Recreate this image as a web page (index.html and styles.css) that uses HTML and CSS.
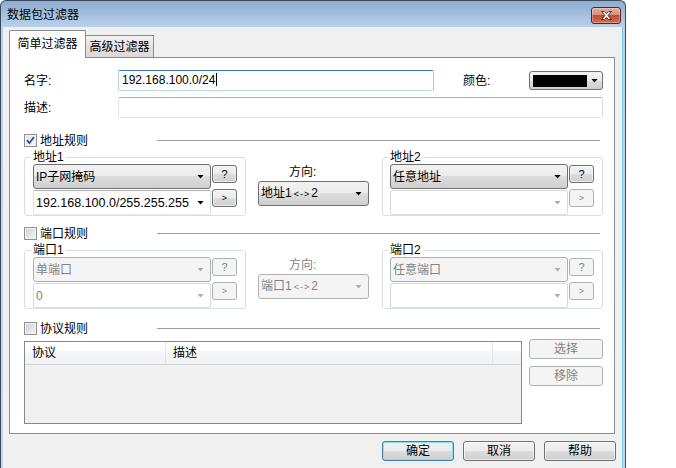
FILE: index.html
```html
<!DOCTYPE html>
<html lang="zh-CN">
<head>
    <meta charset="UTF-8">
    <title>数据包过滤器</title>
    <link rel="stylesheet" href="styles.css">
</head>
<body>
    <div class="window">
        <div class="titlebar">
            <span class="title">数据包过滤器</span>
            <span class="close-btn">
                <svg width="11" height="9" viewBox="0 0 12 10"><polygon points="0.5,0.5 3.5,0.5 6,3 8.5,0.5 11.5,0.5 7.7,5 11.5,9.5 8.5,9.5 6,7 3.5,9.5 0.5,9.5 4.3,5" fill="#fff" stroke="#4a1c16" stroke-width="1"/></svg>
            </span>
        </div>

        <div class="client">
            <div class="tabs">
                <div class="tab active">简单过滤器</div>
                <div class="tab">高级过滤器</div>
            </div>

            <div class="panel">
                <div class="fields">
                    <label class="field-label">名字:</label>
                    <div class="textbox focused">192.168.100.0/24<span class="caret"></span></div>
                    <label class="field-label color-label">颜色:</label>
                    <div class="color-combo"><span class="swatch"></span><span class="arrow"></span></div>
                    <label class="field-label">描述:</label>
                    <div class="textbox wide"></div>
                </div>

                <!-- 地址规则 -->
                <div class="section-head">
                    <span class="check-label">
                        <span class="checkbox checked"><svg width="9" height="9" viewBox="0 0 9 9"><path d="M1 4.2 L3.4 7 L8 1" fill="none" stroke="#31509a" stroke-width="1.8"/></svg></span>地址规则
                    </span>
                    <span class="rule"></span>
                </div>
                <div class="rule-grid">
                    <fieldset class="group">
                        <legend>地址1</legend>
                        <div class="group-row">
                            <div class="combo"><span class="combo-text">IP子网掩码</span><span class="arrow"></span></div>
                            <button type="button" class="mini-btn">?</button>
                        </div>
                        <div class="group-row">
                            <div class="combo edit"><span class="combo-text big">192.168.100.0/255.255.255</span><span class="arrow"></span></div>
                            <button type="button" class="mini-btn small">&gt;</button>
                        </div>
                    </fieldset>
                    <div class="direction">
                        <div class="dir-label">方向:</div>
                        <div class="combo dir-combo"><span class="combo-text">地址1<small>&lt;-&gt;</small>2</span><span class="arrow"></span></div>
                    </div>
                    <fieldset class="group right">
                        <legend>地址2</legend>
                        <div class="group-row">
                            <div class="combo"><span class="combo-text">任意地址</span><span class="arrow"></span></div>
                            <button type="button" class="mini-btn">?</button>
                        </div>
                        <div class="group-row">
                            <div class="combo edit disabled"><span class="combo-text"></span><span class="arrow"></span></div>
                            <button type="button" class="mini-btn small disabled">&gt;</button>
                        </div>
                    </fieldset>
                </div>

                <!-- 端口规则 -->
                <div class="section-head">
                    <span class="check-label"><span class="checkbox"></span>端口规则</span>
                    <span class="rule"></span>
                </div>
                <div class="rule-grid ports">
                    <fieldset class="group">
                        <legend>端口1</legend>
                        <div class="group-row">
                            <div class="combo disabled"><span class="combo-text">单端口</span><span class="arrow"></span></div>
                            <button type="button" class="mini-btn disabled">?</button>
                        </div>
                        <div class="group-row">
                            <div class="combo edit disabled"><span class="combo-text">0</span><span class="arrow"></span></div>
                            <button type="button" class="mini-btn small disabled">&gt;</button>
                        </div>
                    </fieldset>
                    <div class="direction">
                        <div class="dir-label disabled">方向:</div>
                        <div class="combo dir-combo disabled"><span class="combo-text">端口1<small>&lt;-&gt;</small>2</span><span class="arrow"></span></div>
                    </div>
                    <fieldset class="group right">
                        <legend>端口2</legend>
                        <div class="group-row">
                            <div class="combo disabled"><span class="combo-text">任意端口</span><span class="arrow"></span></div>
                            <button type="button" class="mini-btn disabled">?</button>
                        </div>
                        <div class="group-row">
                            <div class="combo edit disabled"><span class="combo-text"></span><span class="arrow"></span></div>
                            <button type="button" class="mini-btn small disabled">&gt;</button>
                        </div>
                    </fieldset>
                </div>

                <!-- 协议规则 -->
                <div class="section-head">
                    <span class="check-label"><span class="checkbox"></span>协议规则</span>
                    <span class="rule"></span>
                </div>
                <div class="proto">
                    <div class="listview">
                        <div class="lv-head">
                            <span class="lv-col c1">协议</span>
                            <span class="lv-col c2">描述</span>
                            <span class="lv-col c3"></span>
                        </div>
                    </div>
                    <div class="side-btns">
                        <button type="button" class="btn side disabled">选择</button>
                        <button type="button" class="btn side disabled">移除</button>
                    </div>
                </div>
            </div>

            <div class="footer">
                <button type="button" class="btn default">确定</button>
                <button type="button" class="btn">取消</button>
                <button type="button" class="btn">帮助</button>
            </div>
        </div>
    </div>
</body>
</html>
```

FILE: styles.css
```css
body {
    margin: 0;
    background: #fff;
    font-family: "Liberation Sans", "Noto Sans CJK SC", sans-serif;
    font-size: 12px;
    color: #000;
}
.window {
    width: 626px;
    height: 468px;
    box-sizing: border-box;
    border: 1px solid #3c4a5c;
    border-bottom: none;
    border-radius: 6px 6px 0 0;
    background: linear-gradient(#8fadd1, #b9d1ea 26px, #c2d7ee);
    display: flex;
    flex-direction: column;
    overflow: hidden;
}
.titlebar {
    height: 26px;
    flex-shrink: 0;
    display: flex;
    justify-content: space-between;
    align-items: flex-start;
}
.title {
    margin: 7px 0 0 6px;
    line-height: 14px;
}
.close-btn {
    margin: 6px 4px 0 0;
    width: 30px;
    height: 17px;
    box-sizing: border-box;
    border: 1px solid #5a2420;
    border-radius: 3px;
    background: linear-gradient(#e9ab9c 0%, #dc8e7d 45%, #c44a32 50%, #d0705a 100%);
    box-shadow: inset 0 0 0 1px rgba(255,255,255,.3);
    display: flex;
    align-items: center;
    justify-content: center;
}
.client {
    flex: 1;
    margin: 0 3px 0 2px;
    padding: 3px 7px 0 6px;
    background: #f0f0f0;
    box-shadow: 1px 0 0 #7cc8ef;
}

/* tabs */
.tabs {
    display: flex;
    align-items: flex-end;
    height: 27px;
}
.tab {
    box-sizing: border-box;
    border: 1px solid #898c95;
    border-bottom: none;
    text-align: center;
    line-height: 14px;
}
.tab.active {
    position: relative;
    z-index: 1;
    width: 77px;
    height: 28px;
    margin-bottom: -1px;
    padding-top: 6px;
    background: #fff;
    border-radius: 2px 2px 0 0;
}
.tab:not(.active) {
    width: 69px;
    height: 22px;
    margin-left: -1px;
    padding-top: 4px;
    background: linear-gradient(#f2f2f2, #e2e2e2 50%, #dadada);
}
.panel {
    height: 377px;
    box-sizing: border-box;
    border: 1px solid #898c95;
    background: #fff;
    padding: 12px 11px 0 14px;
}

/* name / colour / description */
.fields {
    display: grid;
    grid-template-columns: 94px 316px 1fr 74px;
    grid-template-rows: 21px 21px;
    row-gap: 6px;
    align-items: center;
    margin-bottom: 15px;
}
.field-label {
    line-height: 14px;
}
.color-label {
    padding-left: 29px;
}
.textbox {
    height: 21px;
    box-sizing: border-box;
    border: 1px solid;
    border-color: #abadb3 #dbdfe6 #e3e9ef #e2e3ea;
    border-radius: 2px;
    background: #fff;
    padding: 0 3px;
    line-height: 19px;
}
.textbox.focused {
    border-color: #3d7bad #a4c9e3 #b7d9ed #b5cfe7;
}
.textbox.wide {
    grid-column: 2 / 5;
}
.caret {
    display: inline-block;
    width: 1px;
    height: 13px;
    margin-left: 1px;
    background: #000;
    vertical-align: -2px;
}
.color-combo {
    height: 19px;
    box-sizing: border-box;
    border: 1px solid #707070;
    border-radius: 3px;
    background: linear-gradient(#f2f2f2 0%, #ebebeb 50%, #dddddd 50%, #cfcfcf 100%);
    display: flex;
    align-items: center;
    padding: 0 4px 0 3px;
}
.swatch {
    width: 54px;
    height: 12px;
    background: #000;
    margin-right: auto;
}

/* section headers */
.section-head {
    display: flex;
    align-items: center;
    height: 15px;
}
.check-label {
    width: 133px;
    display: flex;
    align-items: center;
    line-height: 14px;
}
.checkbox {
    width: 13px;
    height: 13px;
    box-sizing: border-box;
    margin-right: 3px;
    border: 1px solid #8e8f8f;
    background: linear-gradient(135deg, #cbcfd5, #f6f6f6);
    box-shadow: inset 0 0 0 1px #f4f4f4;
    display: flex;
    align-items: center;
    justify-content: center;
}
.checkbox.checked {
    background: linear-gradient(135deg, #dfe2e6, #fbfbfb);
}
.rule {
    flex: 1;
    height: 1px;
    margin-right: 3px;
    background: #a0a0a0;
}

/* address / port groups */
.rule-grid {
    display: grid;
    grid-template-columns: 222px 1fr 221px;
    margin: 2px 0 10px;
}
.rule-grid.ports {
    margin-bottom: 12px;
}
.group {
    margin: 0;
    padding: 0 8px;
    min-width: 0;
    border: 1px solid #d5dfe5;
    border-radius: 3px;
}
.group.right {
    padding-left: 7px;
}
.group legend {
    padding: 0 2px;
    margin-left: -2px;
    line-height: 14px;
}
.group-row {
    display: flex;
    gap: 1px;
}
.group-row + .group-row {
    margin-top: 1px;
}
.combo {
    width: 178px;
    height: 25px;
    box-sizing: border-box;
    border: 1px solid #707070;
    border-radius: 3px;
    background: linear-gradient(#f2f2f2 0%, #ebebeb 50%, #dddddd 50%, #cfcfcf 100%);
    display: flex;
    align-items: center;
    padding: 0 6px 0 2px;
    line-height: 14px;
}
.combo-text {
    flex: 1;
    white-space: nowrap;
}
.combo-text.big {
    font-size: 12.5px;
}
.combo-text small {
    font-size: 9px;
    letter-spacing: 1px;
    margin: 0 1px 0 2px;
}
.combo.edit {
    background: #fff;
    border-color: #abadb3 #dbdfe6 #e3e9ef #e2e3ea;
    border-radius: 2px;
}
.combo.disabled {
    border-color: #adb2b5;
    background: #f4f4f4;
    color: #838383;
}
.combo.edit.disabled {
    background: #fff;
    border-color: #d9d9d9;
}
.arrow {
    width: 7px;
    height: 4px;
    background: #000;
    clip-path: polygon(0 0, 100% 0, 50% 100%);
}
.disabled .arrow {
    background: #adadad;
}
.mini-btn {
    width: 25px;
    height: 18px;
    margin-top: 1px;
    padding: 0;
    box-sizing: border-box;
    border: 1px solid #707070;
    border-radius: 3px;
    background: linear-gradient(#f2f2f2 0%, #ebebeb 50%, #dddddd 50%, #cfcfcf 100%);
    box-shadow: inset 0 0 0 1px rgba(255,255,255,.6);
    font-family: inherit;
    font-size: 11px;
    line-height: 14px;
    color: #000;
}
.mini-btn.small {
    font-size: 9px;
}
.group-row + .group-row .mini-btn {
    margin-top: -1px;
}
.mini-btn.disabled {
    border-color: #adb2b5;
    background: #f4f4f4;
    box-shadow: none;
    color: #838383;
}
.direction {
    padding-left: 12px;
}
.dir-label {
    margin: 15px 0 2px 31px;
    line-height: 14px;
}
.dir-label.disabled {
    color: #838383;
}
.dir-combo {
    width: 111px;
}

/* protocol list */
.proto {
    display: flex;
    gap: 7px;
    margin-top: 5px;
}
.listview {
    width: 498px;
    height: 83px;
    box-sizing: border-box;
    border: 1px solid #828790;
    background: #f0f0f0;
}
.lv-head {
    display: flex;
    height: 23px;
    box-sizing: border-box;
    border-bottom: 1px solid #d5d5d5;
    background: linear-gradient(#fff 0%, #fff 40%, #f6f7f8 40%, #f1f2f4 100%);
}
.lv-col {
    box-sizing: border-box;
    padding-left: 7px;
    line-height: 22px;
    border-right: 1px solid #e3e5e7;
}
.lv-col.c1 {
    width: 141px;
}
.lv-col.c2 {
    width: 327px;
}
.lv-col.c3 {
    flex: 1;
    border-right: none;
}
.side-btns {
    display: flex;
    flex-direction: column;
    gap: 7px;
    margin-top: -2px;
}

/* buttons */
.btn {
    width: 72px;
    height: 20px;
    padding: 0;
    box-sizing: border-box;
    border: 1px solid #707070;
    border-radius: 3px;
    background: linear-gradient(#f2f2f2 0%, #ebebeb 50%, #dddddd 50%, #cfcfcf 100%);
    box-shadow: inset 0 0 0 1px rgba(255,255,255,.6);
    font-family: inherit;
    font-size: 12px;
    line-height: 16px;
    color: #000;
}
.btn.side {
    width: 74px;
}
.btn.disabled {
    border-color: #adb2b5;
    background: #f4f4f4;
    box-shadow: none;
    color: #838383;
}
.btn.default {
    border-color: #3c7fb1;
    box-shadow: inset 0 0 0 1px #8ddff8;
}
.footer {
    display: flex;
    justify-content: flex-end;
    gap: 9px;
    margin: 7px -1px 0 0;
}
```
